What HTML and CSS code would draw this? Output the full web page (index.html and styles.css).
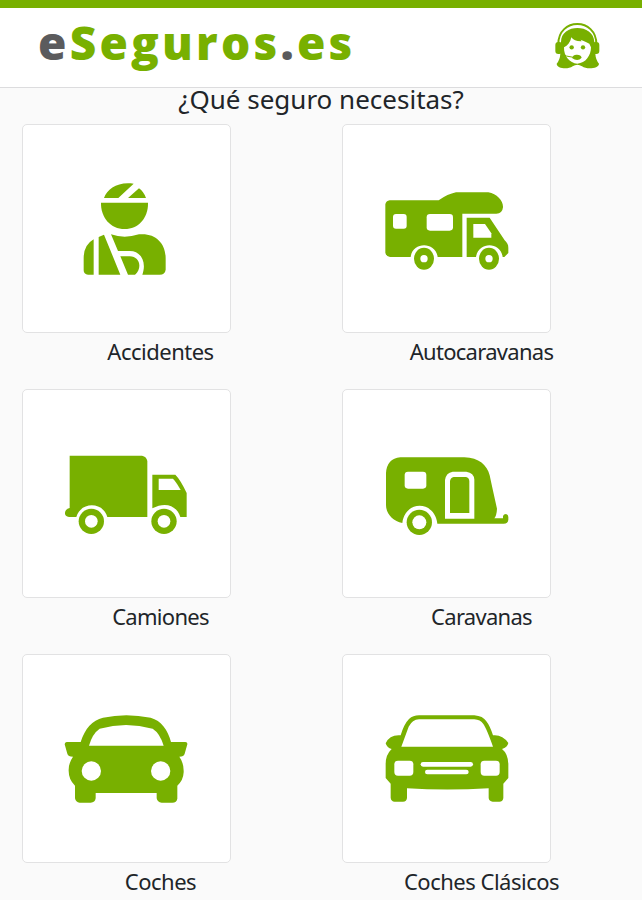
FILE: index.html
```html
<!DOCTYPE html>
<html lang="es">
<head>
<meta charset="utf-8">
<title>eSeguros.es</title>
<link rel="stylesheet" href="styles.css">
</head>
<body>
<header class="header">
  <div class="logo"><span class="logo-gray">e</span>Seguros<span class="logo-gray">.</span>es</div>
  <svg class="agent" viewBox="525 65 135 144">
    <path class="line thin" d="M535 132C534 51 650 51 649 132"/>
    <path d="M543 125C543 69 641 69 643 125L646 160Q647 178 657 190C657 204 622 209 606 198Q592 188 578 198C562 209 530 204 530 190Q540 178 541 160Z"/>
    <path class="white" d="M552 141C563 136 571 126 574 111Q583 124 605 123L602 118Q619 125 628 130L633 141C633 165 617 189 592 190C569 189 551 167 552 141Z"/>
    <rect x="526" y="125" width="21" height="36" rx="9"/><rect x="637" y="125" width="21" height="36" rx="9"/>
    <circle cx="575" cy="141" r="6.500"/><circle cx="609" cy="141" r="6.500"/>
    <path d="M576 173Q580 162 591 163Q603 163 605 172Q593 186 576 173Z"/>
    <path class="line hair" d="M544 157Q556 170 580 171"/>
  </svg>
</header>
<main>
  <h1 class="title">¿Qué seguro necesitas?</h1>
  <div class="grid">
    <a class="item">
      <div class="card"><svg viewBox="-141 -135 621 621">
        <path d="M102 84C112 55 145 34 191 41L145 84ZM174 84L207 55Q221 65 228 84Z"/>
        <path d="M93 98H234C235 145 204 177 164 177C121 177 92 142 93 98Z"/>
        <path d="M71 208V314H54Q41 313 41 301V265Q41 225 71 208ZM86 201L102 194L151 314H86ZM123 193Q163 207 207 193C257 188 287 220 287 265V299Q285 314 269 314H217C231 275 212 242 178 243H144ZM151 259H178C208 258 219 293 195 314H174Z"/>
      </svg></div>
      <p class="label">Accidentes</p>
    </a>
    <a class="item">
      <div class="card"><svg viewBox="-96 -165 621 621">
        <path d="M31 73Q33 63 44 61H191Q218 42 243 37H340C366 42 385 62 384 82Q382 101 364 101H262V231H188C182 184 112 184 107 231H45Q33 229 31 218Z"/>
        <path d="M275 113H344L389 181Q400 191 400 203V219L388 231H383C377 184 310 184 303 231H275Z"/>
        <rect class="white" x="54" y="102" width="41" height="44" rx="9"/><rect class="white" x="155" y="102" width="79" height="50" rx="10"/>
        <path class="white" d="M295 132H330L349 160V173H295Z"/>
        <ellipse cx="147" cy="236" rx="30" ry="33"/><circle class="white" cx="147" cy="236" r="11"/>
        <ellipse cx="342" cy="236" rx="30" ry="33"/><circle class="white" cx="342" cy="236" r="11"/>
      </svg></div>
      <p class="label tight">Autocaravanas</p>
    </a>
    <a class="item">
      <div class="card"><svg viewBox="-96 -165 621 621">
        <path d="M44 32H261Q275 35 277 48V216H157C145 170 77 169 64 216H42Q29 214 30 203Q31 192 44 189Z"/>
        <path d="M292 89H361Q377 105 395 144V216H376C365 181 331 169 292 190Z"/>
        <path class="white" d="M311 101H354Q364 111 377 135H311Z"/>
        <circle cx="109" cy="229" r="38"/><circle class="white" cx="109" cy="229" r="19"/>
        <circle cx="327" cy="229" r="38"/><circle class="white" cx="327" cy="229" r="19"/>
      </svg></div>
      <p class="label tight">Camiones</p>
    </a>
    <a class="item">
      <div class="card"><svg viewBox="-96 -165 621 621">
        <path d="M76 37H268C312 38 336 61 344 91Q352 129 366 191Q365 211 358 220H384V213Q386 207 393 207Q400 208 400 216V224Q399 236 386 236H187C179 165 90 165 82 234C54 228 33 207 33 180V84Q36 41 76 37Z"/>
        <rect class="white" x="89" y="80" width="65" height="51" rx="10"/>
        <path class="white" d="M210 221V105Q213 83 233 80H274Q297 83 298 104V221Z"/>
        <path d="M225 204V108Q227 98 236 96H273Q282 98 283 108V204Z"/>
        <circle cx="133" cy="232" r="38"/><circle class="white" cx="133" cy="232" r="21"/>
      </svg></div>
      <p class="label tight">Caravanas</p>
    </a>
    <a class="item">
      <div class="card"><svg viewBox="-96 -150 621 621">
        <path d="M35 111H77C90 70 112 46 144 38Q213 23 287 38C319 47 338 74 348 111H391Q398 112 397 118L389 146Q387 155 373 155Q387 174 386 202Q385 226 367 242V281Q365 293 352 293H320Q307 292 305 280V264H122V280Q120 293 107 293H74Q62 292 60 280V242Q41 224 41 198Q40 175 54 155Q39 155 37 146L29 118Q29 112 35 111Z"/>
        <path class="white" d="M102 122Q112 86 134 71Q213 49 293 71Q315 85 326 122Z"/>
        <circle class="white" cx="109" cy="198" r="29"/><circle class="white" cx="317" cy="198" r="29"/>
      </svg></div>
      <p class="label">Coches</p>
    </a>
    <a class="item">
      <div class="card"><svg viewBox="-96 -150 621 621">
        <path d="M77 91Q87 57 102 42Q114 31 132 31H298Q324 33 334 49Q344 61 354 91Q382 88 400 114Q397 128 381 132Q399 146 400 177V219L385 236V279Q384 290 373 290H353Q342 289 341 279V250Q216 257 96 250V279Q95 290 84 290H59Q48 289 47 278V236L32 219V177Q32 149 50 132Q36 129 32 115Q44 88 77 91Z"/>
        <path class="white" d="M79 125L101 65Q112 44 132 43H298Q316 44 325 57Q334 69 354 125Z"/>
        <rect class="white" x="58" y="167" width="57" height="45" rx="11"/><rect class="white" x="317" y="167" width="57" height="45" rx="11"/>
        <rect class="white" x="137" y="171" width="157" height="14" rx="7"/><rect class="white" x="150" y="194" width="131" height="14" rx="7"/>
      </svg></div>
      <p class="label">Coches Clásicos</p>
    </a>
  </div>
</main>
</body>
</html>
```
FILE: styles.css
```css
* { box-sizing: border-box; }
body {
  margin: 0;
  height: 900px;
  overflow: hidden;
  background: #fafafa;
  color: #212529;
  font-family: "Noto Sans", "Open Sans", sans-serif;
}
.header {
  height: 88px;
  border-top: 8px solid #78b000;
  border-bottom: 1px solid #dcdcde;
  background: #fff;
  display: flex;
  justify-content: space-between;
  align-items: flex-start;
  padding: 0 42px 0 38px;
}
.logo {
  margin-top: 1px;
  font: 800 46px/66px "Open Sans", "Noto Sans", sans-serif;
  letter-spacing: 3.2px;
  color: #78b000;
  white-space: nowrap;
}
.logo-gray { color: #5b5b5d; }
.agent { width: 45px; height: 48px; margin-top: 14px; }
svg { fill: #78b000; display: block; }
.white { fill: #fff; }
.line { fill: none; stroke: #78b000; }
.thin { stroke-width: 6; }
.hair { stroke-width: 3; }
.title {
  margin: 0;
  height: 36px;
  font-size: 26px;
  font-weight: 400;
  line-height: 22px;
  text-align: center;
  white-space: nowrap;
}
.grid {
  display: grid;
  grid-template-columns: 320px 322px;
  grid-auto-rows: 265px;
}
.item { display: block; }
.card {
  width: 209px;
  height: 209px;
  margin-left: 22px;
  background: #fff;
  border: 1px solid #e2e2e3;
  border-radius: 5px;
}
.card svg { width: 207px; height: 207px; }
.label {
  margin: 0;
  padding-left: 1px;
  font-size: 22px;
  line-height: 37px;
  letter-spacing: -0.5px;
  text-align: center;
  white-space: nowrap;
}
.tight { letter-spacing: -0.7px; }
```
